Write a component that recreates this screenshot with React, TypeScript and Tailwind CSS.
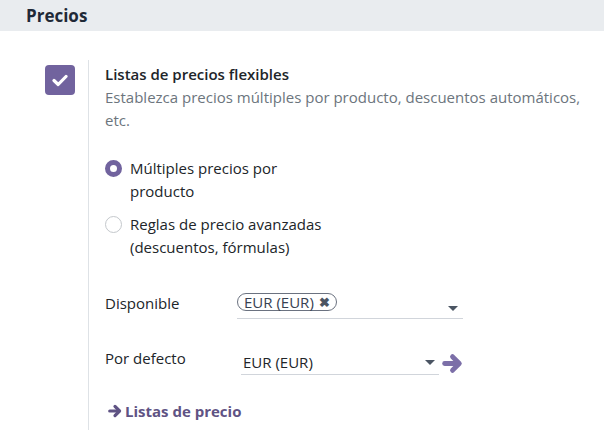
const font = { fontFamily: '"Open Sans", "Noto Sans", sans-serif' };

const Caret = () => (
  <svg width="10" height="6" viewBox="0 0 10 6" className="shrink-0">
    <path d="M0 0 H10 L5 5 Z" fill="#4b5563" />
  </svg>
);

// chunky arrow like the old font-awesome one
const Arrow = ({ size, color }: { size: number; color: string }) => (
  <svg width={size} height={size} viewBox="0 0 20 20" className="shrink-0">
    <g stroke={color} strokeWidth="4.6" fill="none" strokeLinecap="round" strokeLinejoin="round">
      <path d="M2.5 10 H15" />
      <path d="M10 3.5 L16.5 10 L10 16.5" />
    </g>
  </svg>
);

export default function App() {
  return (
    <div className="w-[604px] h-[430px] bg-white overflow-hidden text-[#212529]" style={font}>
      <div className="h-[31px] bg-[#e9ecef] pl-[26px] flex items-center text-[17px] font-bold text-[#1f2937]">
        Precios
      </div>
      <div className="flex pt-[29px]">
        <div className="w-[88px] shrink-0 pl-[45px] pt-[5px]">
          <div className="w-[30px] h-[30px] rounded-[4px] bg-[#71639e] flex items-center justify-center">
            <svg width="16" height="13" viewBox="0 0 16 13">
              <path d="M2 6.5 L6.2 10.5 L14 2.5" stroke="white" strokeWidth="3.2" fill="none" strokeLinecap="round" strokeLinejoin="round" />
            </svg>
          </div>
        </div>
        <div className="border-l border-[#dee2e6] pl-[16px] pt-[3px] flex-1 h-[370px]">
          <div className="text-[15px] font-semibold leading-[23px]">Listas de precios flexibles</div>
          <div className="text-[15px] leading-[23px] text-[#6c757d] pr-[4px]">
            Establezca precios múltiples por producto, descuentos automáticos, etc.
          </div>
          <div className="mt-[25px] flex flex-col gap-[10px] text-[15px] leading-[23px]">
            <label className="flex items-start gap-[8px] w-[220px]">
              <span className="mt-[3px] w-[17px] h-[17px] rounded-full border-[5px] border-[#71639e] bg-white shrink-0" />
              <span>Múltiples precios por producto</span>
            </label>
            <label className="flex items-start gap-[8px] w-[230px]">
              <span className="mt-[3px] w-[17px] h-[17px] rounded-full border border-[#c4c8cc] bg-white shrink-0" />
              <span>Reglas de precio avanzadas (descuentos, fórmulas)</span>
            </label>
          </div>
          <div className="mt-[33px] flex items-start text-[15px]">
            <div className="w-[132px] leading-[23px]">Disponible</div>
            <div className="w-[226px] border-b border-[#d1d5db] h-[27px] flex items-start justify-between">
              <span className="mt-[1px] h-[18px] px-[6px] rounded-full border border-[#6b7280] flex items-center gap-[5px] text-[15px] leading-none text-[#374151]">
                EUR (EUR)
                <span className="text-[13px] font-bold text-[#4b5563]">✖</span>
              </span>
              <span className="mt-[14px] mr-[5px]"><Caret /></span>
            </div>
          </div>
          <div className="mt-[28px] flex items-start text-[15px]">
            <div className="w-[132px] leading-[23px]">Por defecto</div>
            <div className="w-[198px] ml-[4px] border-b border-[#d1d5db] h-[28px] flex items-start justify-between">
              <span className="leading-[23px] mt-[4px] ml-[2px]">EUR (EUR)</span>
              <span className="mt-[13px] mr-[4px]"><Caret /></span>
            </div>
            <span className="ml-[3px] mt-[6px]"><Arrow size={21} color="#7c6fa8" /></span>
          </div>
          <div className="mt-[25px] ml-[3px] flex items-center gap-[3px] text-[15px] font-bold text-[#5f5384]">
            <Arrow size={14} color="#5f5384" />
            Listas de precio
          </div>
        </div>
      </div>
    </div>
  );
}
